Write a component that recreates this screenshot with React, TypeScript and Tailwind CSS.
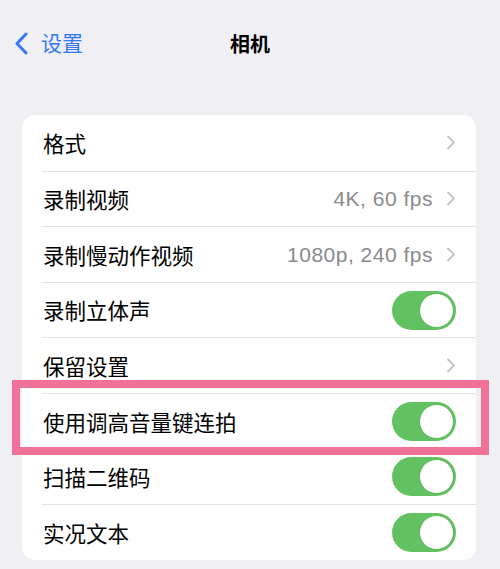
type Row = {
  label: string;
  value?: string;
  kind: 'link' | 'toggle';
};

const rows: Row[] = [
  { label: '格式', kind: 'link' },
  { label: '录制视频', value: '4K, 60 fps', kind: 'link' },
  { label: '录制慢动作视频', value: '1080p, 240 fps', kind: 'link' },
  { label: '录制立体声', kind: 'toggle' },
  { label: '保留设置', kind: 'link' },
  { label: '使用调高音量键连拍', kind: 'toggle' },
  { label: '扫描二维码', kind: 'toggle' },
  { label: '实况文本', kind: 'toggle' },
];

const Toggle = () => (
  <div className="w-[64px] h-[39px] rounded-full bg-[#62c262] flex items-center justify-end pr-[2px]">
    <div className="w-[35px] h-[35px] rounded-full bg-white border border-[#58b558]" />
  </div>
);

const Chevron = () => (
  <svg width="10" height="15" viewBox="0 0 10 15" fill="none" className="text-[#c4c4c7]">
    <polyline
      points="2,1.5 8,7.5 2,13.5"
      stroke="currentColor"
      strokeWidth="2"
      strokeLinecap="round"
      strokeLinejoin="round"
    />
  </svg>
);

const App = () => {
  return (
    <div
      className="relative w-[500px] h-[569px] bg-[#efeff4] overflow-hidden"
      style={{ fontFamily: '"Noto Sans CJK SC", "Noto Sans", sans-serif' }}
    >
      {/* nav bar */}
      <div className="relative h-[115px]">
        <div className="absolute left-[14px] top-[32px] flex items-center text-[#3478f6]">
          <svg width="15" height="23" viewBox="0 0 15 23" fill="none">
            <polyline
              points="12,2 3,11.5 12,21"
              stroke="currentColor"
              strokeWidth="3"
              strokeLinecap="round"
              strokeLinejoin="round"
            />
          </svg>
          <span className="ml-[12px] text-[21px] leading-none -mt-[2px]">设置</span>
        </div>
        <div className="absolute left-0 right-0 top-[34px] text-center text-[20px] font-bold leading-none text-black">
          相机
        </div>
      </div>

      {/* settings list */}
      <div className="mx-[22px] w-[454px] bg-white rounded-[13px] overflow-hidden">
        {rows.map((row, i) => (
          <div key={row.label} className="h-[55.6px] pl-[20px] flex items-stretch">
            <div
              className={
                'flex-1 flex items-center pl-[1px] pr-[20px] ' + (i > 0 ? 'border-t border-[#e2e2e5]' : '')
              }
            >
              <span className="text-[21.5px] text-black leading-none">{row.label}</span>
              <div className="ml-auto flex items-center">
                {row.value && (
                  <span
                    className="text-[21px] tracking-[0.5px] text-[#8a8a8e] mr-[13px] leading-none"
                    style={{ fontFamily: '"Liberation Sans", "Noto Sans CJK SC", sans-serif' }}
                  >
                    {row.value}
                  </span>
                )}
                {row.kind === 'link' ? <Chevron /> : <Toggle />}
              </div>
            </div>
          </div>
        ))}
      </div>

      {/* highlight overlay */}
      <div className="absolute left-[12px] top-[380px] w-[477px] h-[75px] border-[8px] border-[#f27199] pointer-events-none" />
    </div>
  );
};

export default App;
